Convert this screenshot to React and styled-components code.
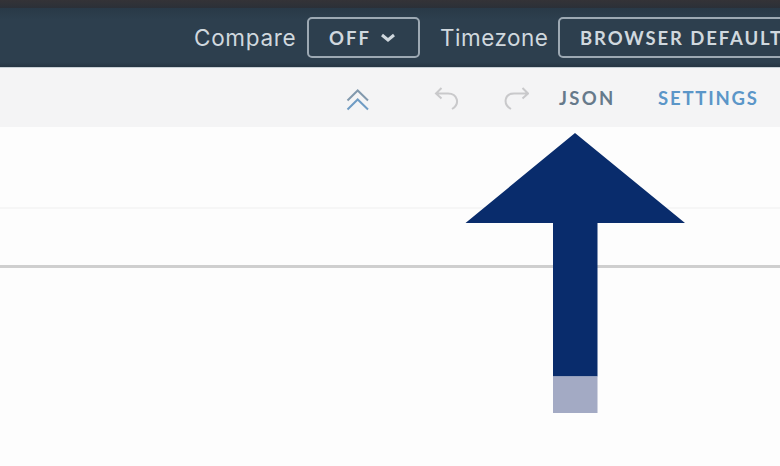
import React from "react";
import styled, { createGlobalStyle } from "styled-components";

const GlobalStyle = createGlobalStyle`
  *, *::before, *::after { box-sizing: border-box; }
  body { margin: 0; overflow: hidden; background: #fdfdfd; font-family: Lato, sans-serif; }
`;

const Page = styled.div`
  position: relative;
  width: 780px;
  height: 466px;
  overflow: hidden;
  display: flex;
  flex-direction: column;
  background: #fdfdfd;
`;

const TopStrip = styled.div`
  flex: none;
  height: 8px;
  background: linear-gradient(#343337, #2b3038);
`;

const Header = styled.header`
  flex: none;
  height: 59px;
  display: flex;
  align-items: flex-start;
  padding: 9px 0 0 194px;
  background: linear-gradient(#293947, #2d3f4e 20%, #2d3f4e 92%, #263542);
`;

const HeaderLabel = styled.span`
  flex: none;
  width: ${(p) => p.$width}px;
  line-height: 42px;
  font-family: Inter, sans-serif;
  font-size: 22.5px;
  letter-spacing: ${(p) => p.$spacing}px;
  color: #d0d8de;
  white-space: nowrap;
`;

const Select = styled.button`
  flex: none;
  width: ${(p) => p.$width}px;
  height: 41px;
  margin: 0 ${(p) => p.$gap || 0}px 0 0;
  padding: 0 0 0 20px;
  display: flex;
  align-items: center;
  gap: 10px;
  border: 2px solid #9da9b3;
  border-radius: 5px;
  background: transparent;
  color: #d0d8de;
  font: 700 18.5px Lato, sans-serif;
  letter-spacing: ${(p) => p.$spacing}px;
  white-space: nowrap;
`;

const Toolbar = styled.div`
  flex: none;
  height: 60px;
  display: flex;
  align-items: flex-start;
  padding: 18px 0 0 345px;
  border-top: 1px solid #c8d0d6;
  background: #f4f4f5;
`;

const IconButton = styled.button`
  flex: none;
  width: 26px;
  height: 26px;
  margin: 0 ${(p) => p.$gap}px 0 0;
  padding: 0;
  border: 0;
  background: none;
  display: grid;
  color: ${(p) => p.$color};
`;

const TextButton = styled.button`
  flex: none;
  width: ${(p) => p.$width}px;
  height: 26px;
  padding: 0;
  border: 0;
  background: none;
  text-align: left;
  color: ${(p) => p.$color};
  font: 700 18.5px/25px Lato, sans-serif;
  letter-spacing: ${(p) => p.$spacing}px;
  white-space: nowrap;
  display: flex;
  align-items: flex-start;
`;

const Row = styled.div`
  flex: none;
  height: ${(p) => p.$height}px;
  border-bottom: ${(p) => p.$line};
`;

const Pointer = styled.svg`
  position: absolute;
  left: 460px;
  top: 128px;
`;

const stroke = { fill: "none", stroke: "currentColor" };

export default function App() {
  return (
    <>
      <GlobalStyle />
      <Page>
        <TopStrip />
        <Header>
          <HeaderLabel $width={113} $spacing={0.7}>Compare</HeaderLabel>
          <Select $width={113} $gap={20} $spacing={2.1}>
            OFF
            <svg width="14" height="10" viewBox="0 0 14 10" {...stroke} strokeWidth="3">
              <path d="M1 2 L7 7 L13 2" />
            </svg>
          </Select>
          <HeaderLabel $width={118} $spacing={0.5}>Timezone</HeaderLabel>
          <Select $width={260} $spacing={1.9}>BROWSER DEFAULT</Select>
        </Header>
        <Toolbar>
          <IconButton $color="#6f9cc4" $gap={62} aria-label="Collapse">
            <svg width="26" height="26" {...stroke} strokeWidth="2">
              <path d="M2.5 14.5 L12.7 4.5 L23 14.5" stroke="#8299ad" />
              <path d="M2.5 23.5 L12.7 13.5 L23 23.5" />
            </svg>
          </IconButton>
          <IconButton $color="#c9c9cb" $gap={44} aria-label="Undo">
            <svg width="26" height="26" {...stroke} strokeWidth="2">
              <path d="M8.5 2 L3 7.5 L8.5 12.5 M3 7.5 H15 C24.5 7.5 27.5 18 19 23" />
            </svg>
          </IconButton>
          <IconButton $color="#c9c9cb" $gap={30} aria-label="Redo">
            <svg width="26" height="26" {...stroke} strokeWidth="2">
              <path d="M19.5 2 L25 7.5 L19.5 12.5 M25 7.5 H11 C1.5 7.5 -0.5 18 8 23" />
            </svg>
          </IconButton>
          <TextButton $width={99} $color="#667a8b" $spacing={2.3}>JSON</TextButton>
          <TextButton $width={110} $color="#5b96c8" $spacing={1.8}>SETTINGS</TextButton>
        </Toolbar>
        <Row $height={82} $line="2px solid #f6f6f6" />
        <Row $height={59} $line="3px solid #cfcfcf" />
        <Pointer width="230" height="290">
          <path d="M5.5 95 L115 5 L225 95 H137.5 V248.5 H93 V95 Z" fill="#092c6c" />
          <rect x="93" y="248.5" width="44.5" height="36.5" fill="#a3aac4" />
        </Pointer>
      </Page>
    </>
  );
}
